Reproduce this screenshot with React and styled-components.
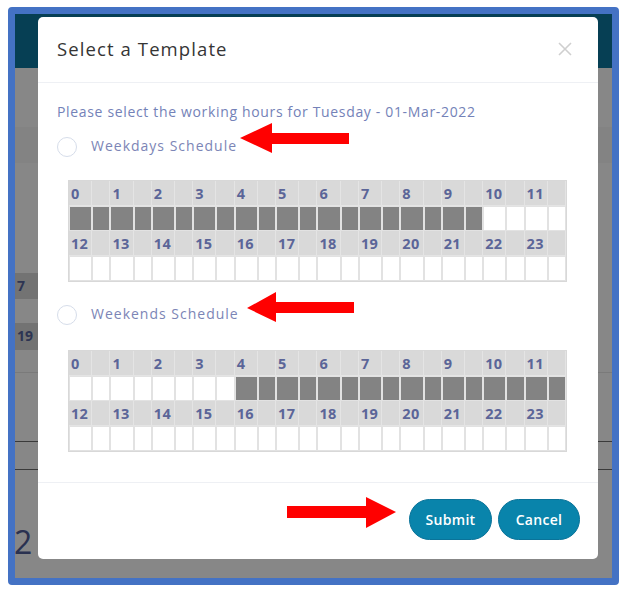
import React from 'react';
import styled, { createGlobalStyle } from 'styled-components';

const GlobalStyle = createGlobalStyle`
  html, body {
    margin: 0;
    padding: 0;
    background: #ffffff;
  }
  body {
    font-family: "Open Sans", "Liberation Sans", sans-serif;
  }
`;

const Page = styled.div`
  position: relative;
  width: 626px;
  height: 592px;
  padding: 7px 7px 0 8px;
  box-sizing: border-box;
`;

const Frame = styled.div`
  position: relative;
  width: 611px;
  height: 578px;
  box-sizing: border-box;
  border: 7px solid #4472c4;
  border-radius: 4px;
  background: #878787;
  display: flex;
  flex-direction: column;
  overflow: hidden;
`;

const TopBar = styled.div`
  height: 54px;
  flex-shrink: 0;
  background: #063f54;
`;

// rows of the page sitting behind the dialog
const BackRow = styled.div`
  display: flex;
  flex-shrink: 0;
  height: ${(p) => p.$h}px;
  background: ${(p) => p.$bg || 'transparent'};
  border-bottom: ${(p) => (p.$line ? `1px solid ${p.$line}` : 'none')};
  box-sizing: border-box;
`;

const BackCell = styled.div`
  width: 44px;
  background: ${(p) => p.$bg || 'transparent'};
  color: #2d3452;
  font-family: "Open Sans", sans-serif;
  font-weight: 700;
  font-size: 14px;
  line-height: 26px;
  padding-left: 2px;
`;

const BigNumber = styled.div`
  color: #2a3150;
  font-family: "Open Sans", sans-serif;
  font-size: 32px;
  line-height: 40px;
  margin-top: 52px;
  margin-left: -1px;
`;

const Modal = styled.div`
  position: absolute;
  left: 23px;
  top: 3px;
  width: 560px;
  height: 542px;
  background: #ffffff;
  border-radius: 5px;
  display: flex;
  flex-direction: column;
`;

const ModalHeader = styled.div`
  height: 66px;
  flex-shrink: 0;
  box-sizing: border-box;
  padding: 0 25px 2px 19px;
  display: flex;
  align-items: center;
  justify-content: space-between;
  border-bottom: 1px solid #eef0f4;
`;

const Title = styled.h2`
  margin: 0;
  font-size: 18.5px;
  font-weight: 500;
  color: #353535;
  letter-spacing: 1.1px;
`;

const CloseButton = styled.button`
  border: none;
  background: none;
  padding: 0;
  width: 16px;
  height: 16px;
  display: flex;
  cursor: pointer;
`;

const ModalBody = styled.div`
  flex: 1;
  padding: 19px 20px 0 19px;
  border-bottom: 1px solid #eef0f4;
`;

const Subtitle = styled.p`
  margin: 0;
  font-size: 14px;
  line-height: 20px;
  color: #7482b8;
  letter-spacing: 0.66px;
`;

const RadioRow = styled.label`
  display: flex;
  align-items: center;
  gap: 14px;
  height: 24px;
  margin-top: ${(p) => p.$top}px;
  margin-bottom: ${(p) => p.$bottom}px;
  cursor: pointer;
`;

const RadioCircle = styled.span`
  width: 20px;
  height: 20px;
  border-radius: 50%;
  border: 1px solid #d6ddea;
  box-sizing: border-box;
  background: #ffffff;
`;

const RadioLabel = styled.span`
  font-size: 14px;
  line-height: 20px;
  color: #7c85b6;
  letter-spacing: 1px;
  margin-top: -3px;
`;

const HourGrid = styled.div`
  display: grid;
  grid-template-columns: repeat(12, 23fr 18fr);
  grid-auto-rows: 25px;
  width: 499px;
  margin-left: 11px;
  border: 1px solid #d8d8d8;
  box-sizing: border-box;
`;

const HourLabel = styled.div`
  background: #d9d9d9;
  border-right: 1px solid #e4e4e4;
  border-bottom: 1px solid #e4e4e4;
  font-weight: 700;
  font-size: 14.5px;
  line-height: 25px;
  color: #5b6598;
  padding-left: 2px;
  letter-spacing: 0.3px;
  white-space: nowrap;
  overflow: visible;
  position: relative;
  z-index: 1;
`;

const Slot = styled.div`
  background: ${(p) => (p.$on ? '#838383' : '#ffffff')};
  border: 1px solid #e2e2e2;
  box-sizing: border-box;
`;

const ModalFooter = styled.div`
  height: 76px;
  flex-shrink: 0;
  display: flex;
  justify-content: flex-end;
  align-items: flex-start;
  gap: 6px;
  padding: 16px 18px 0 0;
  box-sizing: border-box;
`;

const PillButton = styled.button`
  height: 41px;
  width: ${(p) => p.$w}px;
  border-radius: 21px;
  border: 1px solid #0a7399;
  background: #0984ab;
  color: #ffffff;
  font-family: "Open Sans", sans-serif;
  font-size: 14px;
  font-weight: 600;
  letter-spacing: 0.3px;
  cursor: pointer;
`;

const Annotations = styled.svg`
  position: absolute;
  left: 0;
  top: 0;
  pointer-events: none;
`;

const hours = Array.from({ length: 24 }, (_, i) => i);

function ScheduleGrid({ isOn }) {
  const renderBlock = (from) => {
    const block = hours.slice(from, from + 12);
    return (
      <>
        {block.map((h) => (
          <React.Fragment key={`l${h}`}>
            <HourLabel>{h}</HourLabel>
            <HourLabel />
          </React.Fragment>
        ))}
        {block.map((h) => (
          <React.Fragment key={`s${h}`}>
            <Slot $on={isOn(h)} />
            <Slot $on={isOn(h)} />
          </React.Fragment>
        ))}
      </>
    );
  };
  return (
    <HourGrid>
      {renderBlock(0)}
      {renderBlock(12)}
    </HourGrid>
  );
}

export default function App() {
  return (
    <Page>
      <GlobalStyle />
      <Frame>
        <TopBar />
        <BackRow $h={59} />
        <BackRow $h={36} $bg="#838383" />
        <BackRow $h={110} />
        <BackRow $h={26}>
          <BackCell $bg="#737373">7</BackCell>
        </BackRow>
        <BackRow $h={24} />
        <BackRow $h={27}>
          <BackCell $bg="#737373">19</BackCell>
        </BackRow>
        <BackRow $h={23} $line="#7a7a7a" />
        <BackRow $h={69} $line="#3a3a3a" />
        <BackRow $h={28} $line="#3a3a3a" />
        <BigNumber>2</BigNumber>

        <Modal>
          <ModalHeader>
            <Title>Select a Template</Title>
            <CloseButton aria-label="Close">
              <svg width="16" height="16" viewBox="0 0 16 16">
                <path d="M2 2 L14 14 M14 2 L2 14" stroke="#cfcfcf" strokeWidth="1.6" />
              </svg>
            </CloseButton>
          </ModalHeader>
          <ModalBody>
            <Subtitle>Please select the working hours for Tuesday - 01-Mar-2022</Subtitle>
            <RadioRow $top={13} $bottom={21}>
              <RadioCircle />
              <RadioLabel>Weekdays Schedule</RadioLabel>
            </RadioRow>
            <ScheduleGrid isOn={(h) => h < 10} />
            <RadioRow $top={21} $bottom={23}>
              <RadioCircle />
              <RadioLabel>Weekends Schedule</RadioLabel>
            </RadioRow>
            <ScheduleGrid isOn={(h) => h >= 4 && h < 12} />
          </ModalBody>
          <ModalFooter>
            <PillButton $w={83}>Submit</PillButton>
            <PillButton $w={82}>Cancel</PillButton>
          </ModalFooter>
        </Modal>
      </Frame>

      <Annotations width="626" height="592">
        <polygon fill="#ff0000" points="240,138 272,123 272,133 349,133 349,144 272,144 272,153" />
        <polygon fill="#ff0000" points="247,308 276,292 276,302 354,302 354,313 276,313 276,322" />
        <polygon fill="#ff0000" points="396,512 366,497 366,506 287,506 287,518 366,518 366,528" />
      </Annotations>
    </Page>
  );
}
